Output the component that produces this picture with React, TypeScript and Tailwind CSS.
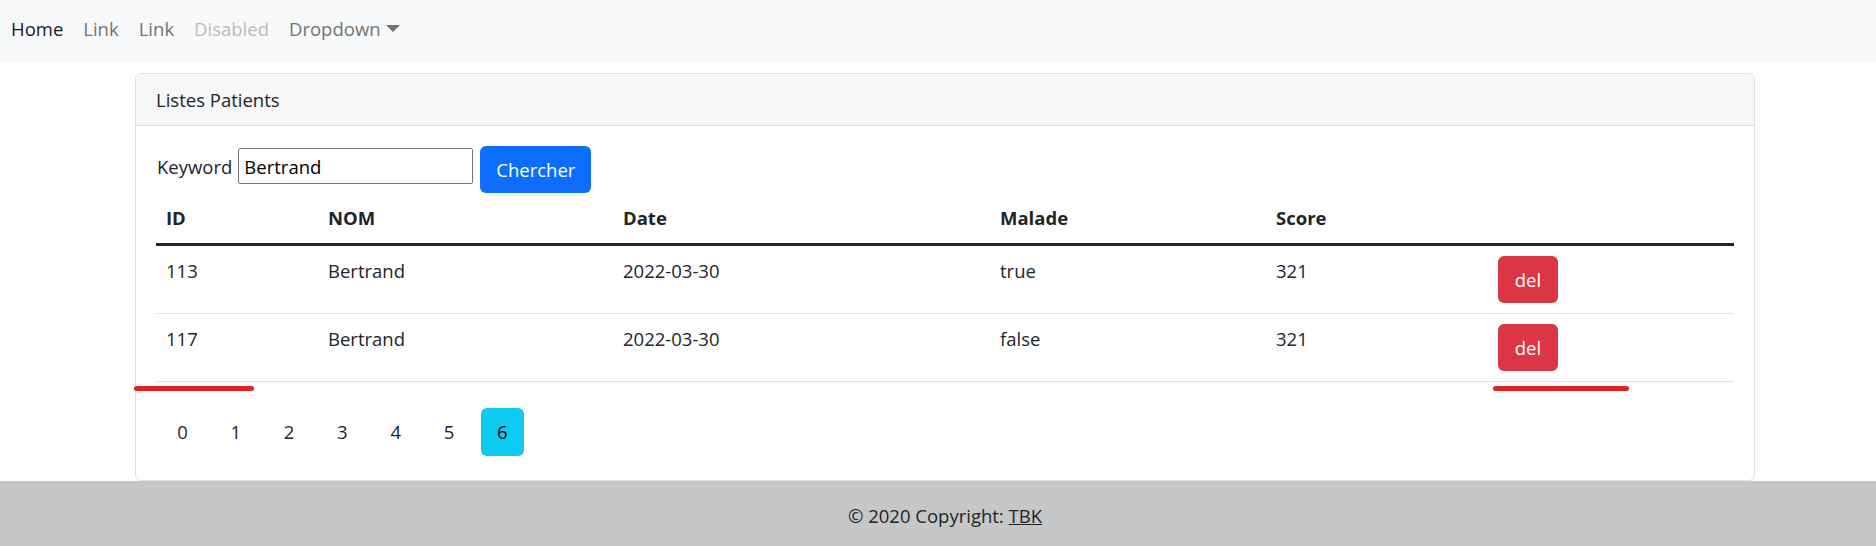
import React from "react";

const rows = [
  { id: 113, nom: "Bertrand", date: "2022-03-30", malade: "true", score: 321 },
  { id: 117, nom: "Bertrand", date: "2022-03-30", malade: "false", score: 321 },
];

const gridCols = "grid grid-cols-[162px_295px_377px_276px_222px_246px]";

export default function App() {
  return (
    <div className="w-full overflow-hidden bg-white">
      <div className="relative w-[1890px] font-['Open_Sans',sans-serif] text-[18.5px] leading-[30px] text-[#212529]">
        {/* Navbar */}
        <nav className="h-[62px] bg-[#f8f9fa] flex items-center pl-[1px] pb-[5px]">
          <a className="px-[10px] text-[#1a1a1a] cursor-pointer">Home</a>
          <a className="px-[10px] text-[#737373] cursor-pointer">Link</a>
          <a className="px-[10px] text-[#737373] cursor-pointer">Link</a>
          <span className="px-[10px] text-[#bbbcbd]">Disabled</span>
          <a className="px-[10px] text-[#737373] cursor-pointer flex items-center">
            Dropdown
            <span className="inline-block ml-[5px] w-0 h-0 border-t-[7px] border-t-[#737373] border-x-[7px] border-x-transparent" />
          </a>
        </nav>

        {/* Card */}
        <div className="ml-[135px] mt-[11px] w-[1620px] border border-[#dfdfdf] rounded-[6px] overflow-hidden">
          <div className="h-[52px] bg-[#f7f7f7] border-b border-[#dfdfdf] flex items-center px-[20px]">
            Listes Patients
          </div>
          <div className="px-[20px] pt-[20px] pb-[24px]">
            {/* Search form */}
            <div className="flex items-start h-[47px]">
              <label className="mt-[6px] pl-[1px]">Keyword</label>
              <input
                className="ml-[6px] mt-[2px] w-[235px] h-[36px] border border-[#767676] rounded-[2px] px-[5px] text-[18.5px] text-black outline-none"
                defaultValue="Bertrand"
              />
              <button className="ml-[7px] w-[111px] h-[47px] bg-[#0d6efd] text-white rounded-[6px]">
                Chercher
              </button>
            </div>

            {/* Table */}
            <div className="w-[1578px]">
              <div className={`${gridCols} h-[53px] border-b-[3px] border-[#212529] font-bold`}>
                <div className="px-[10px] pt-[10px]">ID</div>
                <div className="px-[10px] pt-[10px]">NOM</div>
                <div className="px-[10px] pt-[10px]">Date</div>
                <div className="px-[10px] pt-[10px]">Malade</div>
                <div className="px-[10px] pt-[10px]">Score</div>
                <div className="px-[10px] pt-[10px]"></div>
              </div>
              {rows.map((r) => (
                <div key={r.id} className={`${gridCols} h-[68px] border-b border-[#dee2e6]`}>
                  <div className="px-[10px] pt-[10px]">{r.id}</div>
                  <div className="px-[10px] pt-[10px]">{r.nom}</div>
                  <div className="px-[10px] pt-[10px]">{r.date}</div>
                  <div className="px-[10px] pt-[10px]">{r.malade}</div>
                  <div className="px-[10px] pt-[10px]">{r.score}</div>
                  <div className="px-[10px] pt-[10px]">
                    <button className="w-[60px] h-[47px] bg-[#dc3545] text-white rounded-[6px]">del</button>
                  </div>
                </div>
              ))}
            </div>

            {/* Pagination */}
            <div className="flex mt-[26px] pl-[5px] gap-[10.3px]">
              {[0, 1, 2, 3, 4, 5, 6].map((p) => (
                <button
                  key={p}
                  className={
                    p === 6
                      ? "w-[43px] h-[48px] rounded-[6px] bg-[#0dcaf0] text-black flex items-center justify-center"
                      : "w-[43px] h-[48px] rounded-[6px] text-[#212529] flex items-center justify-center"
                  }
                >
                  {p}
                </button>
              ))}
            </div>
          </div>
        </div>

        {/* Footer */}
        <footer className="bg-[#c6c7c8] py-[20px] text-center">
          © 2020 Copyright: <a className="underline text-[#212529] cursor-pointer">TBK</a>
        </footer>

        {/* Annotation marks */}
        <div className="absolute left-[134px] top-[386px] w-[120px] h-[5px] rounded-full bg-[#e3211f]" />
        <div className="absolute left-[1493px] top-[386px] w-[136px] h-[5px] rounded-full bg-[#e3211f]" />
      </div>
    </div>
  );
}
